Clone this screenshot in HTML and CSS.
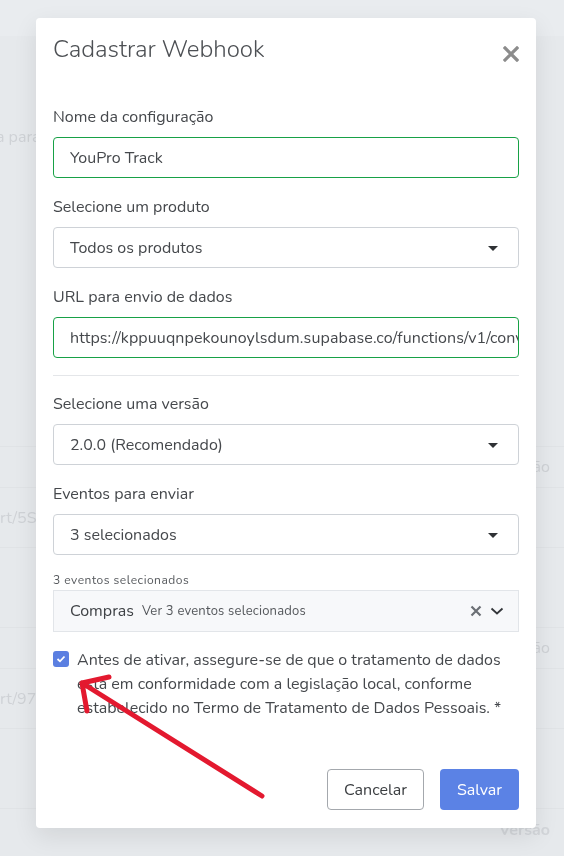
FILE: index.html
```html
<!DOCTYPE html>
<html lang="pt-BR">
<head>
  <meta charset="UTF-8">
  <meta name="viewport" content="width=device-width, initial-scale=1.0">
  <title>Cadastrar Webhook</title>
  <link rel="stylesheet" href="styles.css">
</head>
<body>
  <!-- pagina por tras do modal -->
  <div class="backdrop">
    <div class="bg-top"><span class="bg-left">a para</span></div>
    <div class="bg-row head"><span class="bg-right">Versão</span></div>
    <div class="bg-row item"><span class="bg-left">rt/5S</span></div>
    <div class="bg-row gap"></div>
    <div class="bg-row head"><span class="bg-right">Versão</span></div>
    <div class="bg-row item"><span class="bg-left">rt/97</span></div>
    <div class="bg-row gap"></div>
    <div class="bg-row head strong"><span class="bg-right">Versão</span></div>
  </div>

  <div class="modal">
    <div class="modal-header">
      <h2>Cadastrar Webhook</h2>
      <button class="btn-close" aria-label="Fechar">
        <svg width="16" height="16" viewBox="0 0 16 16"><path d="M2 2 L14 14 M14 2 L2 14" stroke="#8c8c8c" stroke-width="3.2" stroke-linecap="square"/></svg>
      </button>
    </div>

    <div class="field">
      <label>Nome da configuração</label>
      <div class="input valid">YouPro Track</div>
    </div>

    <div class="field">
      <label>Selecione um produto</label>
      <div class="input select">Todos os produtos<span class="caret"></span></div>
    </div>

    <div class="field">
      <label>URL para envio de dados</label>
      <div class="input valid url">https://kppuuqnpekounoylsdum.supabase.co/functions/v1/conversion-webhook</div>
    </div>

    <hr class="divider">

    <div class="field">
      <label>Selecione uma versão</label>
      <div class="input select">2.0.0 (Recomendado)<span class="caret"></span></div>
    </div>

    <div class="field">
      <label>Eventos para enviar</label>
      <div class="input select">3 selecionados<span class="caret"></span></div>
    </div>

    <div class="events">
      <div class="events-label">3 eventos selecionados</div>
      <div class="events-box">
        <span class="events-name">Compras</span>
        <span class="events-more">Ver 3 eventos selecionados</span>
        <span class="events-icons">
          <svg width="12" height="12" viewBox="0 0 12 12"><path d="M1.5 1.5 L10.5 10.5 M10.5 1.5 L1.5 10.5" stroke="#6b6f75" stroke-width="2.2"/></svg>
          <svg width="14" height="10" viewBox="0 0 14 10"><path d="M1.5 2.5 L7 7.5 L12.5 2.5" fill="none" stroke="#33363a" stroke-width="1.8"/></svg>
        </span>
      </div>
    </div>

    <div class="consent">
      <span class="check">
        <svg width="10" height="8" viewBox="0 0 10 8"><path d="M1.5 4 L4 6.3 L8.5 1.5" fill="none" stroke="#fff" stroke-width="1.8"/></svg>
      </span>
      <p>Antes de ativar, assegure-se de que o tratamento de dados está em conformidade com a legislação local, conforme estabelecido no Termo de Tratamento de Dados Pessoais. *</p>
    </div>

    <div class="modal-footer">
      <button class="btn-cancel">Cancelar</button>
      <button class="btn-save">Salvar</button>
    </div>

    <!-- seta de destaque -->
    <svg class="arrow" width="200" height="130" viewBox="0 0 200 130">
      <path d="M186 115 L6 2 M6 2 L33 -4 M6 2 L11 30" fill="none" stroke="#e3192f" stroke-width="5" stroke-linecap="round" stroke-linejoin="round"/>
    </svg>
  </div>
</body>
</html>
```

FILE: styles.css
```css
/* Reset */
* {
  margin: 0;
  padding: 0;
  box-sizing: border-box;
}

body {
  font-family: 'Nunito', 'Lato', sans-serif;
  background: #e6e9ec;
  color: #45484c;
  height: 856px;
  overflow: hidden;
  padding-top: 18px;
}

/* Background page (dimmed) */
.backdrop {
  position: fixed;
  top: 0;
  left: 0;
  width: 100%;
  z-index: 0;
  color: #cfd2d6;
  font-size: 16px;
}

.bg-top {
  height: 447px;
  padding-top: 126px;
  border-bottom: 1px solid #e0e3e6;
  background: linear-gradient(#e9ecef 0, #e9ecef 36px, #e6e9ec 36px);
}

.bg-top .bg-left {
  margin-left: -4px;
}

.bg-row {
  display: flex;
  align-items: center;
  border-bottom: 1px solid #e0e3e6;
}

.bg-row.head { height: 41px; }
.bg-row.item { height: 60px; }
.bg-row.gap  { height: 80px; }

.bg-row.strong {
  font-weight: 700;
  color: #d3d6da;
  border-bottom: none;
}

.bg-left {
  margin-left: 0;
}

.bg-right {
  margin-left: auto;
  margin-right: 14px;
}

/* Modal */
.modal {
  position: relative;
  z-index: 1;
  width: 500px;
  height: 810px;
  margin: 0 auto 0 36px;
  background: #fff;
  border-radius: 4px;
  box-shadow: 0 8px 24px rgba(0, 0, 0, 0.09);
  padding: 0 17px;
}

.modal-header {
  display: flex;
  justify-content: space-between;
  align-items: center;
  height: 87px;
  padding-top: 2px;
  padding-bottom: 28px;
}

.modal-header h2 {
  font-size: 24px;
  font-weight: 300;
  color: #4d5054;
}

.btn-close {
  border: none;
  background: none;
  width: 16px;
  height: 16px;
  margin-top: 10px;
  cursor: pointer;
}

/* Fields */
.field {
  margin-bottom: 17px;
}

label {
  display: block;
  font-size: 16px;
  line-height: 24px;
  color: #45484c;
  margin-bottom: 8px;
}

.input {
  position: relative;
  height: 41px;
  border: 1px solid #ced2d7;
  border-radius: 4px;
  padding: 0 16px;
  font-size: 16px;
  line-height: 40px;
  color: #45484c;
  white-space: nowrap;
  overflow: hidden;
}

.input.valid {
  border-color: #17a146;
}

.input.url {
  letter-spacing: 0.1px;
}

.caret {
  position: absolute;
  right: 20px;
  top: 18px;
  border-left: 5px solid transparent;
  border-right: 5px solid transparent;
  border-top: 5px solid #2f3235;
}

.divider {
  border: none;
  border-top: 1px solid #e4e6e9;
  margin-bottom: 16px;
}

/* Selected events */
.events-label {
  font-size: 12px;
  line-height: 18px;
  color: #55585c;
  margin-top: -1px;
  margin-bottom: 1px;
  letter-spacing: 0.5px;
}

.events-box {
  display: flex;
  align-items: center;
  height: 42px;
  background: #f7f8fa;
  border: 1px solid #e2e5e9;
  padding: 0 16px;
}

.events-name {
  font-size: 16px;
  color: #3f4246;
  margin-right: 8px;
}

.events-more {
  font-size: 13px;
  color: #55585c;
  letter-spacing: 0.2px;
}

.events-icons {
  margin-left: auto;
  display: flex;
  align-items: center;
  gap: 8px;
  margin-right: -2px;
}

/* Consent */
.consent {
  display: flex;
  align-items: flex-start;
  margin-top: 16px;
}

.check {
  flex: none;
  display: flex;
  align-items: center;
  justify-content: center;
  width: 16px;
  height: 16px;
  margin-top: 3px;
  margin-right: 8px;
  background: #5b7fe1;
  border-radius: 3px;
}

.consent p {
  font-size: 16px;
  line-height: 24px;
  color: #45484c;
}

/* Footer */
.modal-footer {
  display: flex;
  justify-content: flex-end;
  gap: 16px;
  margin-top: 49px;
}

.modal-footer button {
  height: 41px;
  border-radius: 4px;
  font-family: inherit;
  font-size: 16px;
  cursor: pointer;
}

.btn-cancel {
  width: 97px;
  background: #fff;
  border: 1px solid #a4a8ad;
  color: #3a3d40;
}

.btn-save {
  width: 79px;
  background: #5b82e5;
  border: none;
  color: #fff;
}

.arrow {
  position: absolute;
  left: 40px;
  top: 663px;
  overflow: visible;
}
```
